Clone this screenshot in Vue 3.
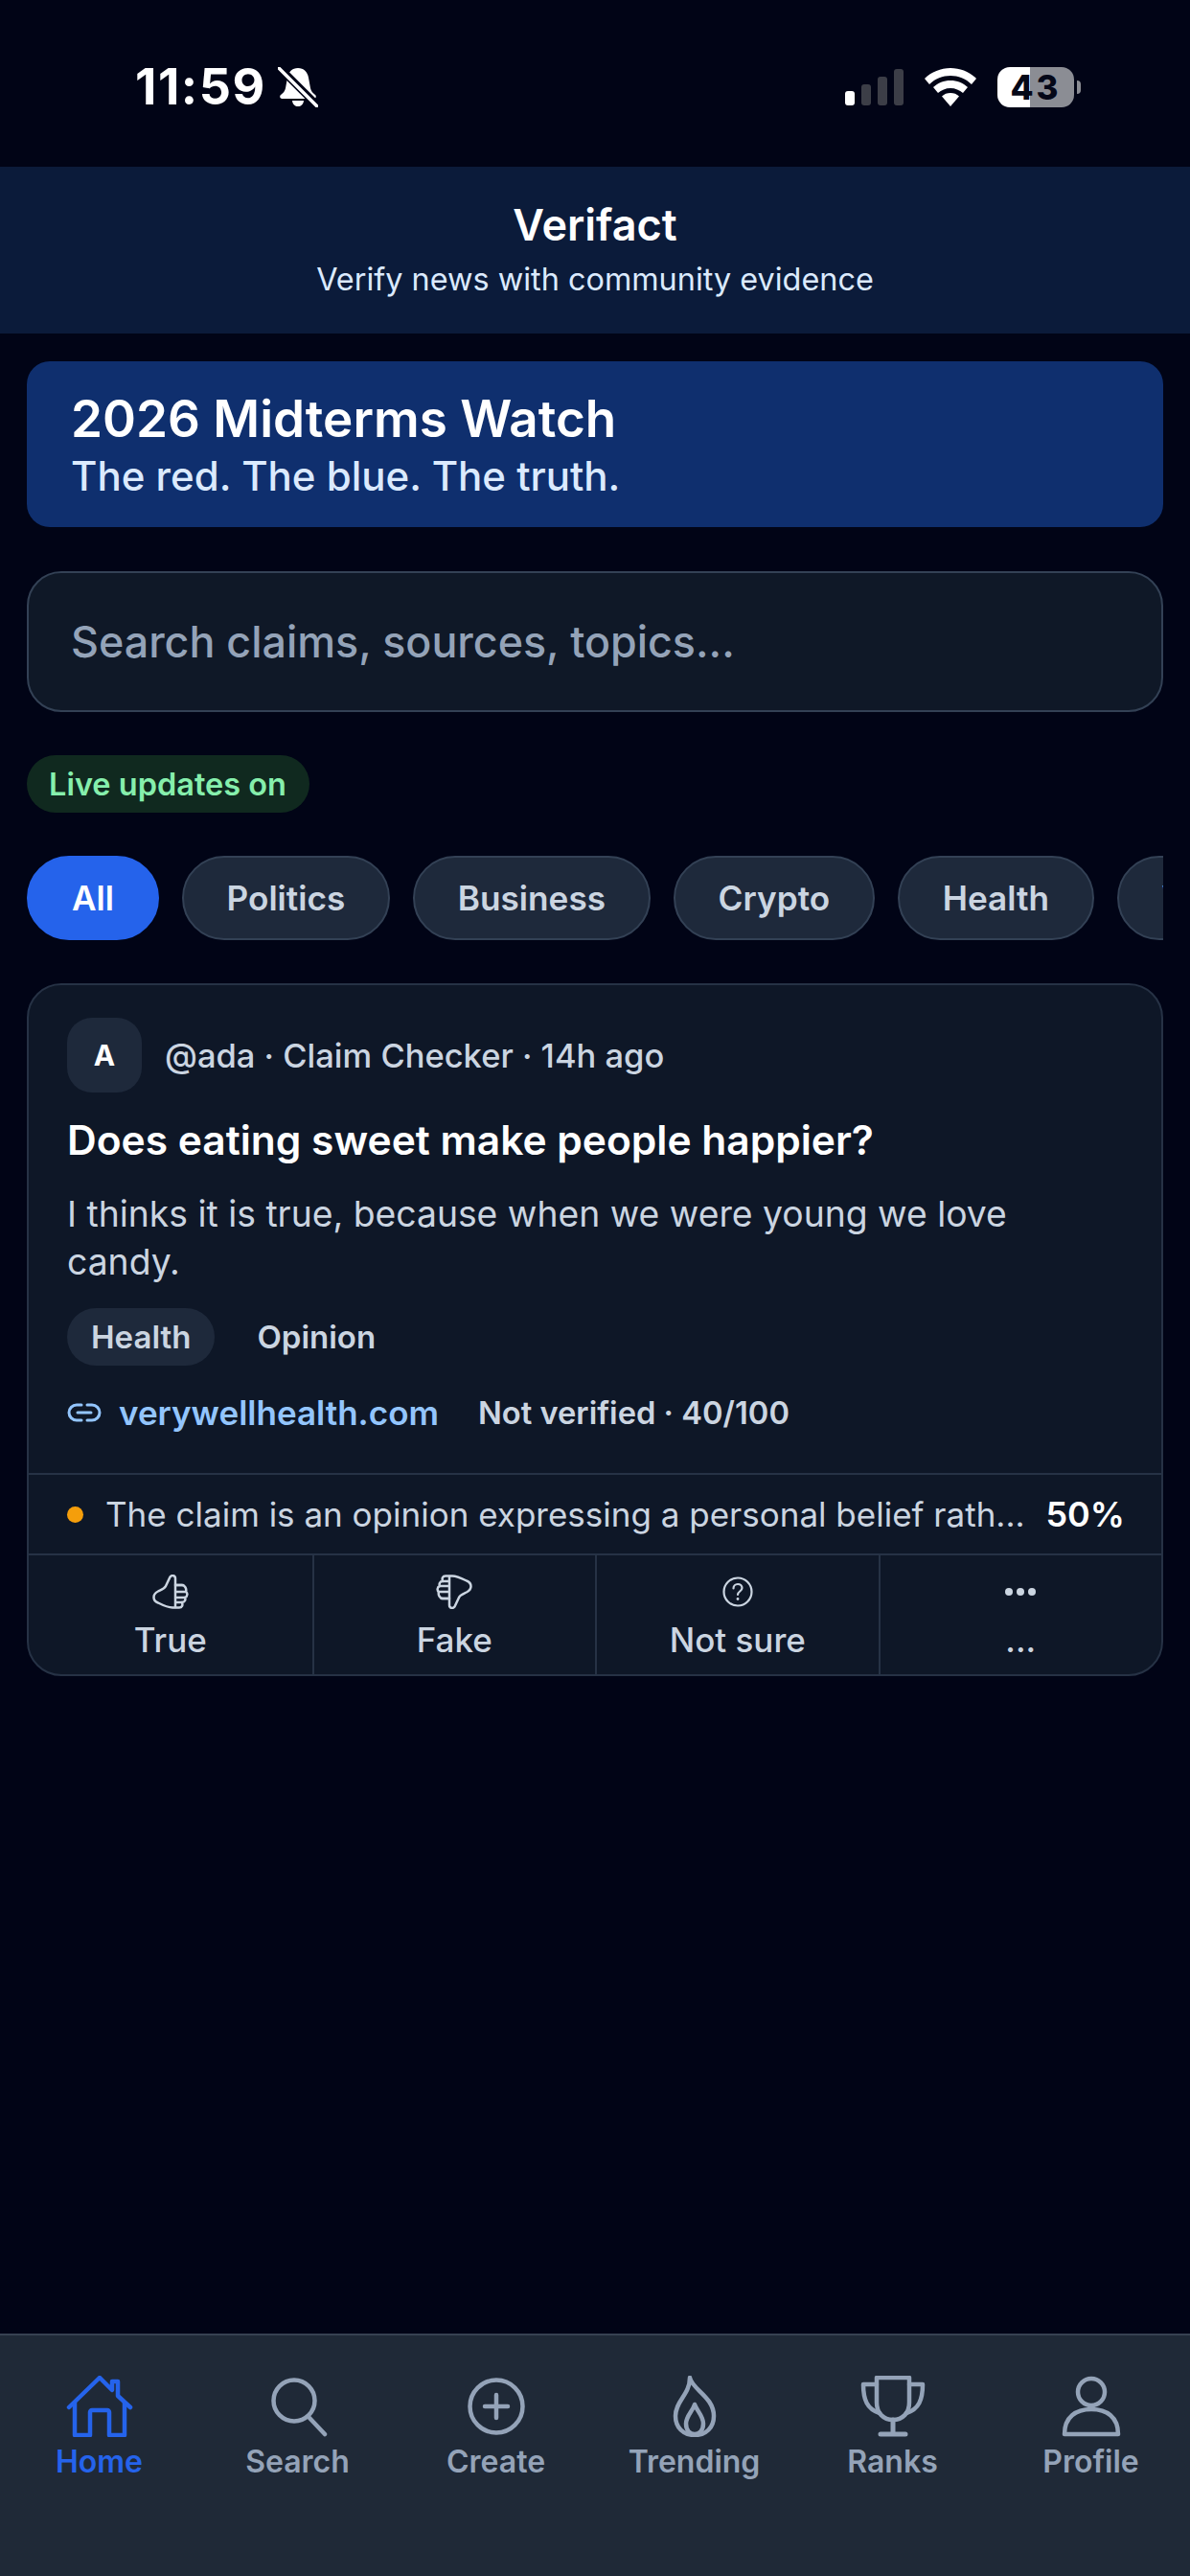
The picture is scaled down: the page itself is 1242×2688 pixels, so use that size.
<script setup>
const categories = ["All", "Politics", "Business", "Crypto", "Health", "Viral"];

const tabs = [
  { label: "Home", icon: "home", active: true },
  { label: "Search", icon: "search" },
  { label: "Create", icon: "create" },
  { label: "Trending", icon: "flame" },
  { label: "Ranks", icon: "trophy" },
  { label: "Profile", icon: "user" },
];

const votes = [
  { label: "True", icon: "up" },
  { label: "Fake", icon: "down" },
  { label: "Not sure", icon: "question" },
  { label: "...", icon: "dots" },
];
</script>

<template>
  <div class="screen">
    <div class="status">
      <div class="status-left">
        <span class="time">11:59</span>
        <svg width="42" height="42" viewBox="0 0 42 42">
          <path d="M21 1c6 0 10 4 11 10l2 11c.5 3 2.500 5 5 7 1.500 1.500 1 4-2 4H5c-3 0-3.500-2.500-2-4 2.500-2 4.500-4 5-7l2-11C11 5 15 1 21 1z" fill="#fff" />
          <path d="M15 35h12c-.5 4-3 6-6 6s-5.500-2-6-6z" fill="#fff" />
          <path d="M2 1l38 38" stroke="#010416" stroke-width="8" />
          <path d="M1 1l40 40" stroke="#fff" stroke-width="3.500" stroke-linecap="round" />
        </svg>
      </div>
      <div class="status-right">
        <div class="signal">
          <i class="bar on b1"></i>
          <i class="bar b2"></i>
          <i class="bar b3"></i>
          <i class="bar b4"></i>
        </div>
        <svg width="54" height="40" viewBox="0 0 54 40">
          <path d="M27 0c10 0 20 4 27 11l-5 6C43 11 35 8 27 8S11 11 5 17l-5-6C7 4 17 0 27 0z" fill="#fff" />
          <path d="M27 13c7 0 13 2.500 18 7l-5 6c-3.500-3-8-5-13-5s-9.500 2-13 5l-5-6c5-4.500 11-7 18-7z" fill="#fff" />
          <path d="M27 26c3.500 0 6.500 1 9 3.500L27 40l-9-10.500c2.500-2.500 5.500-3.500 9-3.500z" fill="#fff" />
        </svg>
        <div class="battery">
          <div class="battery-body">43</div>
          <div class="battery-tip"></div>
        </div>
      </div>
    </div>

    <header class="top">
      <div class="app-name">Verifact</div>
      <div class="app-sub">Verify news with community evidence</div>
    </header>

    <main class="content">
      <section class="banner">
        <div class="banner-title">2026 Midterms Watch</div>
        <div class="banner-sub">The red. The blue. The truth.</div>
      </section>

      <div class="search">Search claims, sources, topics...</div>

      <div class="live">Live updates on</div>

      <div class="chips">
        <div
          v-for="(cat, i) in categories"
          :key="cat"
          class="chip"
          :class="{ active: i === 0 }"
        >
          {{ cat }}
        </div>
      </div>

      <article class="card">
        <div class="card-body">
          <div class="meta">
            <div class="avatar">A</div>
            <span>@ada · Claim Checker · 14h ago</span>
          </div>
          <h2 class="claim">Does eating sweet make people happier?</h2>
          <p class="desc">I thinks it is true, because when we were young we love candy.</p>
          <div class="tags">
            <span class="tag filled">Health</span>
            <span class="tag">Opinion</span>
          </div>
          <div class="source">
            <svg width="36" height="24" viewBox="0 0 36 24" fill="none" stroke="#93c5fd" stroke-width="3" stroke-linecap="round">
              <path d="M15 4H10a8 8 0 0 0 0 16h5" />
              <path d="M21 4h5a8 8 0 0 1 0 16h-5" />
              <path d="M11 12h14" />
            </svg>
            <span class="link">verywellhealth.com</span>
            <span class="status-text">Not verified · 40/100</span>
          </div>
        </div>

        <div class="verdict">
          <i class="dot"></i>
          <span class="verdict-text">The claim is an opinion expressing a personal belief rath...</span>
          <span class="percent">50%</span>
        </div>

        <div class="votes">
          <div v-for="v in votes" :key="v.label" class="vote">
            <div class="vote-icon">
              <svg v-if="v.icon === 'up'" width="38" height="36" viewBox="0 0 38 36" fill="none" stroke="#cbd5e1" stroke-width="2.500" stroke-linejoin="round" stroke-linecap="round">
                <path d="M24 11V4c0-3-3.500-4-5.500-1.500L14 12c-1.500 3-5 4-8 5.500C0 20.500 0 27 6 29.500c5 2.500 10 5 15 5h7c3 0 4-2.500 3-5.500 3 0 4-3 3-5 3-1 3-5 1-6 1-3-1-7-4-7z" />
                <path d="M24 11h8M24 18h11M24 24h10M24 29h7M24 11v23" />
              </svg>
              <svg v-else-if="v.icon === 'down'" width="38" height="36" viewBox="0 0 38 36" fill="none" stroke="#cbd5e1" stroke-width="2.500" stroke-linejoin="round" stroke-linecap="round" transform="rotate(180)">
                <path d="M24 11V4c0-3-3.500-4-5.500-1.500L14 12c-1.500 3-5 4-8 5.500C0 20.500 0 27 6 29.500c5 2.500 10 5 15 5h7c3 0 4-2.500 3-5.500 3 0 4-3 3-5 3-1 3-5 1-6 1-3-1-7-4-7z" />
                <path d="M24 11h8M24 18h11M24 24h10M24 29h7M24 11v23" />
              </svg>
              <svg v-else-if="v.icon === 'question'" width="32" height="32" viewBox="0 0 32 32" fill="none" stroke="#cbd5e1" stroke-width="2.200" stroke-linecap="round">
                <circle cx="16" cy="16" r="14.500" />
                <path d="M11.500 12.500c0-2.800 2-4.500 4.500-4.500s4.500 1.700 4.500 4c0 3.500-4.500 3.500-4.500 7" />
                <path d="M16 23.500v.1" stroke-width="2.800" />
              </svg>
              <svg v-else width="34" height="10" viewBox="0 0 34 10" fill="#cbd5e1">
                <circle cx="5" cy="5" r="4" />
                <circle cx="17" cy="5" r="4" />
                <circle cx="29" cy="5" r="4" />
              </svg>
            </div>
            <span class="vote-label">{{ v.label }}</span>
          </div>
        </div>
      </article>
    </main>

    <nav class="tabbar">
      <div v-for="t in tabs" :key="t.label" class="tab" :class="{ active: t.active }">
        <svg width="70" height="64" viewBox="0 0 70 64" fill="none" stroke="currentColor" stroke-width="4.500" stroke-linejoin="round" stroke-linecap="round">
          <template v-if="t.icon === 'home'">
            <path d="M3 33L35 2l13 13V6h6v15l13 12" />
            <path d="M9 28v34h16V38c0-1 1-2 2-2h16c1 0 2 1 2 2v24h16V28" />
          </template>
          <template v-else-if="t.icon === 'search'">
            <circle cx="31" cy="26" r="21.500" />
            <path d="M47 44l16 17" />
          </template>
          <template v-else-if="t.icon === 'create'">
            <circle cx="35" cy="32" r="27.500" />
            <path d="M35 20v24M23 32h24" />
          </template>
          <template v-else-if="t.icon === 'flame'">
            <path d="M30 2c2 12 25 20 25 40 0 12-8 20-20 20S15 54 15 42C15 26 30 20 30 2z" />
            <path d="M35 30c2 6 9 12 9 20 0 7-4 11-9 11s-9-4-9-11c0-8 7-13 9-20z" />
          </template>
          <template v-else-if="t.icon === 'trophy'">
            <path d="M18 2h34v26c0 11-7 18-17 18S18 39 18 28z" />
            <path d="M18 9H4c0 16 4 26 17 30M52 9h14c0 16-4 26-17 30" />
            <path d="M35 46v14M22 61h26" stroke-width="5" />
          </template>
          <template v-else>
            <circle cx="35" cy="17" r="14" />
            <path d="M7 61c0-18 12-26 28-26s28 8 28 26z" />
          </template>
        </svg>
        <span class="tab-label">{{ t.label }}</span>
      </div>
    </nav>
  </div>
</template>

<style>
html,
body {
  margin: 0;
  background: #010416;
}
</style>

<style scoped>
.screen {
  display: flex;
  flex-direction: column;
  width: 1242px;
  height: 2688px;
  overflow: hidden;
  background: #010416;
  font-family: Inter, "Liberation Sans", sans-serif;
  color: #fff;
}

.status {
  display: flex;
  justify-content: space-between;
  align-items: center;
  height: 174px;
  padding: 8px 114px 0 141px;
  box-sizing: border-box;
}
.status-left {
  display: flex;
  align-items: center;
  gap: 12px;
}
.time {
  font-size: 52px;
  font-weight: 700;
  line-height: 60px;
  letter-spacing: 1.500px;
}
.status-right {
  display: flex;
  align-items: center;
  gap: 22px;
}
.signal {
  display: flex;
  align-items: flex-end;
  gap: 7px;
  height: 38px;
}
.bar {
  display: block;
  width: 10px;
  border-radius: 3px;
  background: #3c3e47;
}
.bar.on {
  background: #fff;
}
.b1 { height: 15px; }
.b2 { height: 22px; }
.b3 { height: 30px; }
.b4 { height: 38px; }
.battery {
  display: flex;
  align-items: center;
  gap: 3px;
}
.battery-body {
  width: 80px;
  height: 42px;
  border-radius: 13px;
  background: linear-gradient(90deg, #fff 43%, #8b8d94 43%);
  color: #050818;
  font-size: 35px;
  font-weight: 800;
  line-height: 42px;
  letter-spacing: 3px;
  text-align: center;
}
.battery-tip {
  width: 4px;
  height: 14px;
  border-radius: 0 4px 4px 0;
  background: #8b8d94;
}

.top {
  height: 174px;
  background: #0b1b3a;
  text-align: center;
  box-sizing: border-box;
  padding-top: 33px;
}
.app-name {
  font-size: 45px;
  font-weight: 600;
  line-height: 56px;
}
.app-sub {
  margin-top: 9px;
  font-size: 32.400px;
  line-height: 40px;
  color: #dbeafe;
}

.content {
  flex: 1;
  padding: 29px 28px 0;
  min-height: 0;
}
.banner {
  height: 173px;
  box-sizing: border-box;
  padding: 29px 46px 0;
  border-radius: 24px;
  background: #0f2f6e;
}
.banner-title {
  font-size: 53px;
  font-weight: 600;
  line-height: 62px;
}
.banner-sub {
  margin-top: 3px;
  font-size: 42px;
  font-weight: 500;
  line-height: 52px;
  color: #dbeafe;
}
.search {
  display: flex;
  align-items: center;
  height: 147px;
  margin-top: 46px;
  padding: 0 44px;
  box-sizing: border-box;
  border: 2px solid #334155;
  border-radius: 36px;
  background: #0f1827;
  font-size: 44.800px;
  font-weight: 500;
  color: #94a3b8;
}
.live {
  display: flex;
  align-items: center;
  width: fit-content;
  height: 60px;
  margin-top: 45px;
  padding: 0 24px 0 23px;
  border-radius: 30px;
  background: #10291f;
  color: #86efac;
  font-size: 32.500px;
  font-weight: 600;
}
.chips {
  display: flex;
  gap: 23.500px;
  margin-top: 45px;
  overflow: hidden;
}
.chip {
  display: flex;
  align-items: center;
  flex-shrink: 0;
  height: 88px;
  padding: 0 45px;
  box-sizing: border-box;
  border: 2px solid #334155;
  border-radius: 44px;
  background: #1e293b;
  color: #cbd5e1;
  font-size: 35.200px;
  font-weight: 600;
}
.chip.active {
  border-color: #2563eb;
  background: #2563eb;
  color: #fff;
}

.card {
  margin-top: 45px;
  border: 2px solid #263245;
  border-radius: 36px;
  background: #0e1727;
  overflow: hidden;
}
.card-body {
  padding: 34px 40px 34px;
}
.meta {
  display: flex;
  align-items: center;
  gap: 24px;
  font-size: 34.500px;
  font-weight: 500;
  color: #cbd5e1;
}
.avatar {
  display: flex;
  align-items: center;
  justify-content: center;
  width: 78px;
  height: 78px;
  border-radius: 26px;
  background: #1e293b;
  color: #fff;
  font-size: 30px;
  font-weight: 700;
}
.claim {
  margin: 23px 0 0;
  font-size: 42.500px;
  font-weight: 600;
  line-height: 54px;
}
.desc {
  max-width: 1040px;
  margin: 25px 0 0;
  font-size: 37.300px;
  line-height: 50px;
  color: #cbd5e1;
}
.tags {
  display: flex;
  margin-top: 23px;
}
.tag {
  display: flex;
  align-items: center;
  height: 60px;
  padding: 0 25px;
  margin-right: 19px;
  border-radius: 30px;
  color: #cbd5e1;
  font-size: 33px;
  font-weight: 600;
}
.tag.filled {
  background: #1e293b;
}
.source {
  display: flex;
  align-items: center;
  margin-top: 20px;
  height: 58px;
  font-size: 32.700px;
  font-weight: 600;
}
.source svg {
  margin-right: 18px;
}
.link {
  font-size: 35px;
  color: #93c5fd;
  margin-right: 41px;
}
.status-text {
  color: #cbd5e1;
}
.verdict {
  display: flex;
  align-items: center;
  height: 86px;
  padding: 0 38px 0 40px;
  border-top: 2px solid #263245;
  border-bottom: 2px solid #263245;
  box-sizing: border-box;
  font-size: 35px;
  color: #cbd5e1;
}
.dot {
  display: block;
  width: 17px;
  height: 17px;
  margin-right: 23px;
  border-radius: 50%;
  background: #f59e0b;
}
.verdict-text {
  flex: 1;
  white-space: nowrap;
}
.percent {
  font-size: 36px;
  color: #fff;
  font-weight: 600;
}
.votes {
  display: grid;
  grid-template-columns: repeat(4, 1fr);
  height: 124px;
}
.vote {
  display: flex;
  flex-direction: column;
  align-items: center;
  border-left: 2px solid #263245;
  color: #cbd5e1;
}
.vote:first-child {
  border-left: none;
}
.vote-icon {
  display: flex;
  align-items: center;
  justify-content: center;
  height: 36px;
  margin-top: 20px;
}
.vote-label {
  margin-top: 10px;
  font-size: 35px;
  font-weight: 500;
  line-height: 44px;
}

.tabbar {
  display: grid;
  grid-template-columns: repeat(6, 1fr);
  height: 253px;
  padding-top: 42px;
  box-sizing: border-box;
  border-top: 2px solid #374151;
  background: #1f2937;
}
.tab {
  display: flex;
  flex-direction: column;
  align-items: center;
  color: #94a3b8;
}
.tab.active {
  color: #2563eb;
}
.tab-label {
  margin-top: 6px;
  font-size: 32px;
  font-weight: 600;
  line-height: 40px;
}
</style>
